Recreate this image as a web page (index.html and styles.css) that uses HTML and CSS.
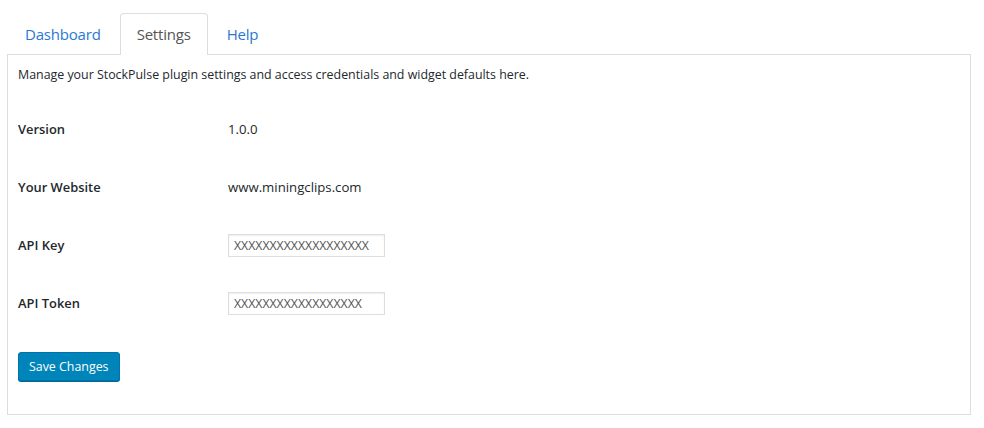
FILE: index.html
```html
<!DOCTYPE html>
<html>
<head>
<meta charset="utf-8">
<link rel="stylesheet" href="styles.css">
</head>
<body>
<div class="wrap">
  <ul class="tabs">
    <li class="tab"><a href="#">Dashboard</a></li>
    <li class="tab active"><a href="#">Settings</a></li>
    <li class="tab"><a href="#">Help</a></li>
  </ul>
  <div class="panel">
    <p class="intro">Manage your StockPulse plugin settings and access credentials and widget defaults here.</p>
    <div class="rows">
      <div class="row"><div class="label">Version</div><div class="value">1.0.0</div></div>
      <div class="row"><div class="label">Your Website</div><div class="value">www.miningclips.com</div></div>
      <div class="row"><div class="label">API Key</div><div class="value"><input class="field" type="text" value="XXXXXXXXXXXXXXXXXXX"></div></div>
      <div class="row"><div class="label">API Token</div><div class="value"><input class="field" type="text" value="XXXXXXXXXXXXXXXXXX"></div></div>
    </div>
    <button class="btn" type="button">Save Changes</button>
  </div>
</div>
</body>
</html>
```
FILE: styles.css
```css
html, body {
  margin: 0;
  padding: 0;
  background: #fff;
}
body {
  font-family: "Open Sans", "Noto Sans", sans-serif;
  color: #23282d;
  font-size: 13px;
}
.wrap {
  padding: 13px 13px 0 7px;
}
.tabs {
  list-style: none;
  margin: 0;
  padding: 0;
  display: flex;
  margin-bottom: -1px;
  position: relative;
  z-index: 1;
}
.tab {
  margin-right: 2px;
}
.tab:first-child {
  margin-left: 1px;
}
.tab a {
  display: block;
  padding: 10px 16px;
  line-height: 20px;
  font-size: 15px;
  color: #2a78d4;
  text-decoration: none;
  border: 1px solid transparent;
  border-bottom: 0;
  border-radius: 4px 4px 0 0;
  letter-spacing: -0.2px;
}
.tab.active a {
  color: #555;
  background: #fff;
  border-color: #ddd;
  padding-bottom: 11px;
}
.panel {
  border: 1px solid #ddd;
  padding: 0 10px;
  box-sizing: border-box;
  width: 964px;
  height: 361px;
}
.intro {
  margin: 0;
  padding-top: 11px;
  line-height: 18px;
  font-size: 12.4px;
}
.rows {
  display: flex;
  flex-direction: column;
  margin-top: 16px;
}
.row {
  display: flex;
  align-items: center;
  height: 58px;
}
.label {
  width: 210px;
  font-weight: 600;
  font-size: 12.9px;
}
.value {
  font-size: 13.2px;
}
.field {
  box-sizing: border-box;
  width: 157px;
  height: 23px;
  border: 1px solid #ddd;
  box-shadow: inset 0 1px 2px rgba(0,0,0,0.07);
  padding: 0 5px;
  font-family: "Open Sans", sans-serif;
  font-size: 12.3px;
  color: #555;
}
.btn {
  margin-top: 20px;
  background: #0085ba;
  border: 1px solid #0073aa;
  border-radius: 3px;
  box-shadow: 0 1px 0 #006799;
  color: #fff;
  font-family: "Open Sans", sans-serif;
  font-size: 12.4px;
  height: 29px;
  padding: 0 10px;
  line-height: 27px;
}
```
